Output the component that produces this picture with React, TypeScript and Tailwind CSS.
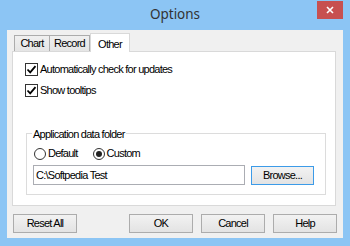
import React from "react";

function CheckBox({ checked }: { checked: boolean }) {
  return (
    <div className="w-[13px] h-[13px] border border-[#333] bg-white flex items-center justify-center shrink-0">
      {checked && (
        <svg width="11" height="11" viewBox="0 0 11 11">
          <path d="M1.5 5.5 L4.2 8.3 L9.5 2.2" stroke="#000" strokeWidth="1.8" fill="none" />
        </svg>
      )}
    </div>
  );
}

function Radio({ checked }: { checked: boolean }) {
  return (
    <div className="w-[12px] h-[12px] rounded-full border border-[#333] bg-white flex items-center justify-center shrink-0">
      {checked && <div className="w-[6px] h-[6px] rounded-full bg-[#222]" />}
    </div>
  );
}

function Btn({ label, w, focus }: { label: string; w: string; focus?: boolean }) {
  return (
    <div
      className={`${w} h-[19px] flex items-center justify-center border ${
        focus ? "border-[#3c9be8]" : "border-[#acacac]"
      } bg-gradient-to-b from-[#f2f2f2] to-[#e3e3e3]`}
    >
      {label}
    </div>
  );
}

export default function App() {
  return (
    <div className="w-[350px] h-[246px] bg-[#8cc5f4] flex flex-col px-[7px] pb-[8px] font-['Liberation_Sans',Arial,sans-serif] text-[11px] tracking-[-0.75px] text-black">
      <div className="h-[30px] relative flex items-center justify-center">
        <span className="text-[13.5px] tracking-normal text-[#333] font-['Noto_Sans',sans-serif] -mt-[2px]">Options</span>
        <div className="absolute right-0 top-[1px] w-[26px] h-[18px] bg-[#c75050] flex items-center justify-center">
          <svg width="8" height="8" viewBox="0 0 8 8">
            <path d="M1 1 L7 7 M7 1 L1 7" stroke="#fff" strokeWidth="1.6" />
          </svg>
        </div>
      </div>
      <div className="flex-1 bg-[#f0f0f0] flex flex-col px-[5px] pt-[3px]">
        <div className="h-[18px] flex items-end pl-[2px] relative z-10">
          <div className="w-[36px] h-[16px] border border-b-0 border-[#acacac] bg-gradient-to-b from-[#f0f0f0] to-[#e5e5e5] flex items-center justify-center">
            Chart
          </div>
          <div className="w-[40px] h-[16px] border border-l-0 border-b-0 border-[#acacac] bg-gradient-to-b from-[#f0f0f0] to-[#e5e5e5] flex items-center justify-center">
            Record
          </div>
          <div className="w-[40px] h-[19px] -mb-[1px] border border-b-0 border-[#d9d9d9] bg-white flex items-start justify-center pt-[2px]">
            Other
          </div>
        </div>
        <div className="w-[324px] h-[155px] border border-[#d9d9d9] bg-white flex flex-col pl-[12px] pt-[11px]">
          <div className="flex items-center gap-[2px] h-[13px]">
            <CheckBox checked />
            <span>Automatically check for updates</span>
          </div>
          <div className="flex items-center gap-[2px] h-[13px] mt-[8px]">
            <CheckBox checked />
            <span>Show tooltips</span>
          </div>
          <div className="relative mt-[36px] ml-[1px] w-[300px] h-[62px] border border-[#dcdcdc]">
            <span className="absolute -top-[8px] left-[5px] bg-white px-[1px]">Application data folder</span>
            <div className="flex items-center mt-[13px] ml-[7px] h-[13px]">
              <Radio checked={false} />
              <span className="ml-[2px]">Default</span>
              <div className="ml-[15px]" />
              <Radio checked />
              <span className="ml-[2px]">Custom</span>
            </div>
            <div className="flex items-center mt-[5px] ml-[6px]">
              <div className="w-[212px] h-[20px] border border-[#abadb3] bg-white flex items-center pl-[2px]">
                C:\Softpedia Test
              </div>
              <div className="ml-[6px]">
                <Btn label="Browse..." w="w-[63px]" focus />
              </div>
            </div>
          </div>
        </div>
        <div className="flex justify-between px-[1px] mt-[8px]">
          <Btn label="Reset All" w="w-[64px]" />
          <div className="flex gap-[8px]">
            <Btn label="OK" w="w-[64px]" />
            <Btn label="Cancel" w="w-[64px]" />
            <Btn label="Help" w="w-[64px]" />
          </div>
        </div>
      </div>
    </div>
  );
}
